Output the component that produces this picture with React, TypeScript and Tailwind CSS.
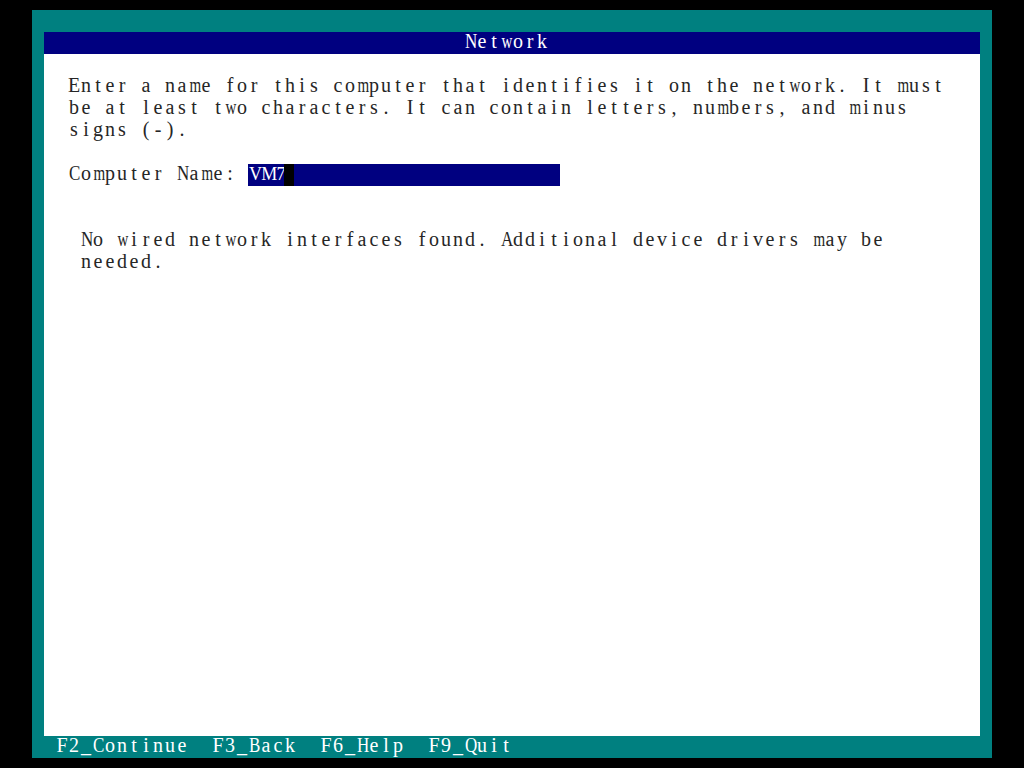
import React from "react";

// Wide serif glyphs are squeezed so every character fits its 12px cell.
function squeeze(c: string) {
  if (c === "M" || c === "W") return "scale-x-[0.65]";
  if (c === "m" || c === "w") return "scale-x-[0.75]";
  if (/[A-Z]/.test(c) && c !== "I" && c !== "F" && c !== "E") return "scale-x-[0.85]";
  return "";
}

// Character-cell line: each glyph sits in a fixed 12px cell, like a text-mode screen.
function Line({ text, className = "" }: { text: string; className?: string }) {
  return (
    <div className={`h-[22px] leading-[18px] whitespace-nowrap ${className}`}>
      {Array.from(text).map((c, i) => (
        <span key={i} className={`inline-block w-[12px] text-center ${squeeze(c)}`}>
          {c === " " ? "\u00a0" : c}
        </span>
      ))}
    </div>
  );
}

export default function App() {
  return (
    <div className="w-[1024px] h-[768px] bg-black pt-[10px] pl-[32px]">
      <div className="w-[960px] h-[748px] bg-[#008080] flex flex-col px-[12px] pt-[22px] font-['Liberation_Serif','Times_New_Roman',serif] text-[20px]">
        {/* title bar */}
        <div className="h-[22px] bg-[#000080] text-white pl-[420px]">
          <Line text="Network" />
        </div>

        {/* body */}
        <div className="flex-1 bg-white text-[#262626] pt-[22px] pl-[24px]">
          <Line text="Enter a name for this computer that identifies it on the network. It must" />
          <Line text="be at least two characters. It can contain letters, numbers, and minus" />
          <Line text="signs (-)." />
          <div className="h-[22px]" />
          <div className="flex items-center h-[22px]">
            <div className="w-[180px]">
              <Line text="Computer Name:" />
            </div>
            <div className="w-[312px] h-[22px] bg-[#000080] flex items-center">
              <span className="w-[36px] h-[22px] pl-px text-[18px] tracking-[-0.8px] text-white leading-[20px]">VM7</span>
              <span className="w-[10px] h-[22px] bg-black" />
            </div>
          </div>
          <div className="h-[44px]" />
          <div className="pl-[12px]">
            <Line text="No wired network interfaces found. Additional device drivers may be" />
            <Line text="needed." />
          </div>
        </div>

        {/* footer */}
        <div className="h-[22px] text-white">
          <Line text=" F2_Continue  F3_Back  F6_Help  F9_Quit" />
        </div>
      </div>
    </div>
  );
}
